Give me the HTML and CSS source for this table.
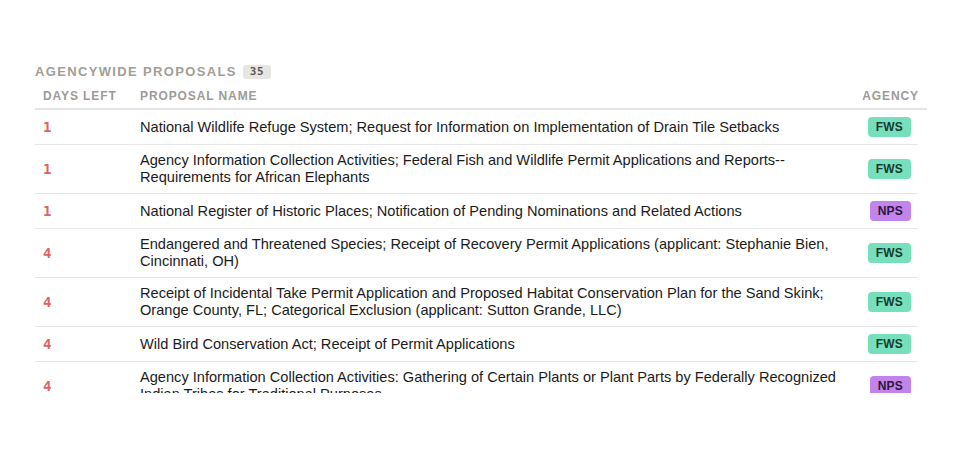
FILE: index.html
```html
<!DOCTYPE html>
<html>
<head>
<meta charset="utf-8">
<link rel="stylesheet" href="styles.css">
</head>
<body>
<section class="panel">
  <h2 class="title">AGENCYWIDE PROPOSALS <span class="count">35</span></h2>
  <div class="thead">
    <div class="th">DAYS LEFT</div>
    <div class="th">PROPOSAL NAME</div>
    <div class="th th-right">AGENCY</div>
  </div>
  <div class="tbody">
    <div class="row"><div class="days">1</div><div class="name">National Wildlife Refuge System; Request for Information on Implementation of Drain Tile Setbacks</div><div class="agency"><span class="badge fws">FWS</span></div></div>
    <div class="row"><div class="days">1</div><div class="name">Agency Information Collection Activities; Federal Fish and Wildlife Permit Applications and Reports--Requirements for African Elephants</div><div class="agency"><span class="badge fws">FWS</span></div></div>
    <div class="row"><div class="days">1</div><div class="name">National Register of Historic Places; Notification of Pending Nominations and Related Actions</div><div class="agency"><span class="badge nps">NPS</span></div></div>
    <div class="row"><div class="days">4</div><div class="name">Endangered and Threatened Species; Receipt of Recovery Permit Applications (applicant: Stephanie Bien, Cincinnati, OH)</div><div class="agency"><span class="badge fws">FWS</span></div></div>
    <div class="row"><div class="days">4</div><div class="name">Receipt of Incidental Take Permit Application and Proposed Habitat Conservation Plan for the Sand Skink; Orange County, FL; Categorical Exclusion (applicant: Sutton Grande, LLC)</div><div class="agency"><span class="badge fws">FWS</span></div></div>
    <div class="row"><div class="days">4</div><div class="name">Wild Bird Conservation Act; Receipt of Permit Applications</div><div class="agency"><span class="badge fws">FWS</span></div></div>
    <div class="row"><div class="days">4</div><div class="name">Agency Information Collection Activities: Gathering of Certain Plants or Plant Parts by Federally Recognized Indian Tribes for Traditional Purposes</div><div class="agency"><span class="badge nps">NPS</span></div></div>
  </div>
</section>
</body>
</html>
```

FILE: styles.css
```css
html, body {
  margin: 0;
  padding: 0;
  background: #ffffff;
  font-family: "Liberation Sans", Arial, sans-serif;
  color: #1b1b1b;
}

.panel {
  width: 892px;
  margin: 0 0 0 35px;
  padding-top: 64px;
}

.title {
  margin: 0 0 4px 0;
  font-size: 13px;
  line-height: 16px;
  font-weight: 700;
  letter-spacing: 1.35px;
  color: #a39d97;
  display: flex;
  align-items: center;
}

.count {
  margin-left: 6px;
  background: #e8e6e3;
  color: #5a5754;
  font-family: "DejaVu Sans Mono", monospace;
  font-size: 11px;
  font-weight: 700;
  letter-spacing: 0.5px;
  line-height: 14px;
  padding: 0 7px;
  border-radius: 3px;
}

.thead {
  display: grid;
  grid-template-columns: 105px 1fr 90px;
  border-bottom: 2px solid #e4e4e4;
}

.th {
  font-size: 12px;
  line-height: 14px;
  font-weight: 700;
  letter-spacing: 0.9px;
  color: #9d9a98;
  padding: 5px 0 5px 0;
}

.th:first-child {
  padding-left: 8px;
}

.th-right {
  text-align: right;
  padding-right: 8px;
}

.tbody {
  width: 883px;
  height: 283px;
  overflow: hidden;
}

.row {
  display: grid;
  grid-template-columns: 105px 712px 1fr;
  align-items: center;
  border-bottom: 1px solid #e6e6e6;
  padding: 7px 0;
}

.days {
  padding-left: 8px;
  font-family: "DejaVu Sans Mono", monospace;
  font-size: 14px;
  font-weight: 600;
  color: #e2625d;
}

.name {
  font-size: 14.6px;
  line-height: 17px;
  color: #1b1b1b;
}

.agency {
  display: flex;
  justify-content: flex-end;
  padding-right: 7px;
}

.badge {
  display: inline-block;
  font-size: 12px;
  font-weight: 700;
  line-height: 16px;
  padding: 2px 8px;
  border-radius: 4px;
  letter-spacing: 0.2px;
}

.fws {
  background: #76e0bd;
  color: #173a2e;
}

.nps {
  background: #c283ea;
  color: #2a1740;
}
```
